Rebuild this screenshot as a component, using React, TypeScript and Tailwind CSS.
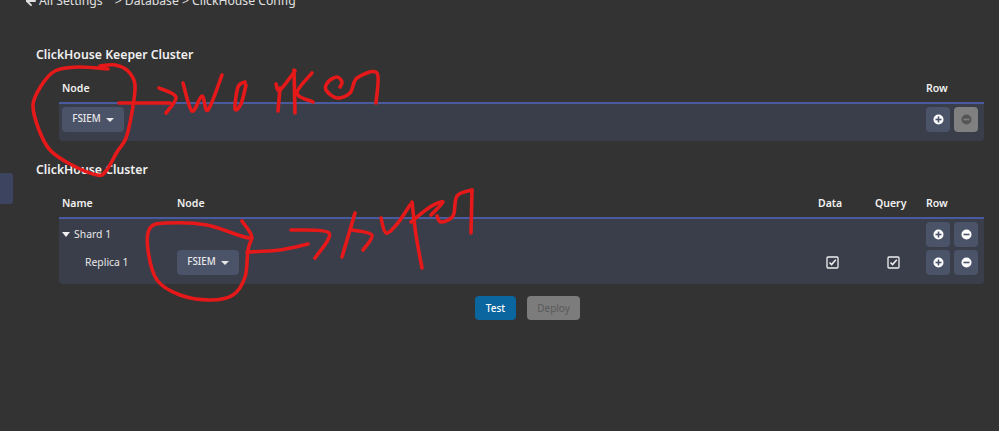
import React from "react";
import { ArrowLeft } from "lucide-react";

type P = [number, number];
function smooth(pts: P[]): string {
  let d = `M${pts[0][0]} ${pts[0][1]}`;
  for (let i = 0; i < pts.length - 1; i++) {
    const p0 = pts[i - 1] || pts[i];
    const p1 = pts[i];
    const p2 = pts[i + 1];
    const p3 = pts[i + 2] || p2;
    const c1x = p1[0] + (p2[0] - p0[0]) / 6;
    const c1y = p1[1] + (p2[1] - p0[1]) / 6;
    const c2x = p2[0] - (p3[0] - p1[0]) / 6;
    const c2y = p2[1] - (p3[1] - p1[1]) / 6;
    d += ` C${c1x} ${c1y} ${c2x} ${c2y} ${p2[0]} ${p2[1]}`;
  }
  return d;
}

const strokes: P[][] = [
  [[108, 69], [78, 67], [55, 71], [41, 86], [33, 105], [39, 130], [50, 150], [70, 164], [97, 175], [106, 171], [117, 152], [126, 138], [132, 112], [135, 85], [128, 71], [115, 65], [100, 66]],
  [[119, 103], [170, 103]],
  [[159, 88], [176, 97], [166, 113]],
  [[183, 83], [192, 111], [202, 96], [208, 110], [222, 75]],
  [[245, 82], [238, 87], [235, 109], [241, 104], [246, 85]],
  [[276, 84], [280, 90], [295, 71]],
  [[280, 88], [278, 111]],
  [[294, 70], [295, 113]],
  [[312, 73], [297, 93], [313, 102]],
  [[340, 87], [342, 82], [337, 77], [328, 82], [326, 90], [337, 98], [350, 93], [357, 78], [377, 73], [376, 103]],
  [[242, 221], [250, 238], [207, 225], [167, 223], [150, 228], [148, 250], [157, 280], [180, 295], [210, 300], [233, 295], [245, 277], [248, 250], [252, 238]],
  [[247, 252], [280, 250], [308, 244]],
  [[291, 230], [329, 233], [315, 258]],
  [[355, 213], [342, 257]],
  [[352, 230], [372, 235], [363, 250]],
  [[381, 218], [386, 233], [397, 224], [410, 205]],
  [[412, 202], [416, 235], [422, 268]],
  [[411, 222], [430, 207], [443, 202], [431, 215]],
  [[437, 216], [441, 222], [453, 216], [457, 196], [472, 190]],
  [[472, 190], [471, 233]],
];

function Ring({ kind, muted }: { kind: "plus" | "minus"; muted?: boolean }) {
  const fg = muted ? "#555555" : "#ffffff";
  const inner = muted ? "#808080" : "#4a5368";
  return (
    <svg width="11" height="11" viewBox="0 0 11 11">
      <circle cx="5.5" cy="5.5" r="5" fill={fg} />
      <rect x="2.5" y="4.7" width="6" height="1.6" fill={inner} />
      {kind === "plus" && <rect x="4.7" y="2.5" width="1.6" height="6" fill={inner} />}
    </svg>
  );
}

function RowBtn({ kind, muted }: { kind: "plus" | "minus"; muted?: boolean }) {
  return (
    <button className={`flex h-[25px] w-6 items-center justify-center rounded-[4px] ${muted ? "bg-[#808080]" : "bg-[#4a5368]"}`}>
      <Ring kind={kind} muted={muted} />
    </button>
  );
}

function NodeSelect() {
  return (
    <button className="flex h-[25px] w-[62px] items-center justify-center gap-[5px] rounded-[4px] bg-[#4a5368] text-[9.8px] font-medium text-[#e8e8e8]">
      FSIEM
      <span className="h-0 w-0 border-x-[4px] border-t-[4px] border-x-transparent border-t-[#e8e8e8]" />
    </button>
  );
}

function Check() {
  return (
    <svg width="13" height="13" viewBox="0 0 13 13">
      <rect x="1" y="1" width="11" height="11" rx="1" fill="none" stroke="#f0f0f0" strokeWidth="1.3" />
      <path d="M3.5 6.5 L5.6 8.6 L9.8 3.8" fill="none" stroke="#f0f0f0" strokeWidth="1.5" />
    </svg>
  );
}

export default function App() {
  return (
    <div
      className="relative h-[431px] w-[999px] overflow-hidden bg-[#333333] text-[#e8e8e8]"
      style={{ fontFamily: '"Noto Sans", "DejaVu Sans", sans-serif' }}
    >
      <div className="mt-[-9px] ml-6 flex h-5 items-center text-[12.2px] text-[#e0e0e0]">
        <ArrowLeft size={14} strokeWidth={3.2} className="mr-[1px]" />
        <span>All Settings</span>
        <span className="ml-3">&gt; Database &gt; ClickHouse Config</span>
      </div>

      <div className="absolute top-[173px] left-0 h-[31px] w-[13px] rounded-r-[3px] bg-[#3c4460]" />

      <div className="mt-[34px] ml-9 w-[948px]">
        <h2 className="h-[20px] text-[12.25px] leading-[20px] font-semibold text-[#f0f0f0]">ClickHouse Keeper Cluster</h2>
        <div className="mt-[15px] ml-[23px] w-[925px]">
          <div className="flex h-[17px] items-center px-[3px] text-[10.5px] font-semibold text-[#f0f0f0]">
            <span>Node</span>
            <span className="ml-auto w-[55px]">Row</span>
          </div>
          <div className="mt-[5px] flex h-[39px] items-start rounded-b-[4px] border-t-2 border-[#4a5a9f] bg-[#393e4a] pt-[3px] pr-[6px] pl-[3px]">
            <NodeSelect />
            <div className="ml-auto flex gap-1">
              <RowBtn kind="plus" />
              <RowBtn kind="minus" muted />
            </div>
          </div>
        </div>

        <h2 className="mt-[19px] h-[20px] text-[12.25px] leading-[20px] font-semibold text-[#f0f0f0]">ClickHouse Cluster</h2>
        <div className="mt-[15px] ml-[23px] w-[925px]">
          <div className="flex h-[17px] items-center px-[3px] text-[10.5px] font-semibold text-[#f0f0f0]">
            <span className="w-[115px]">Name</span>
            <span>Node</span>
            <span className="ml-auto w-[57px]">Data</span>
            <span className="w-[51px]">Query</span>
            <span className="w-[55px]">Row</span>
          </div>
          <div className="mt-[5px] flex h-[67px] flex-col gap-[3px] rounded-b-[4px] border-t-2 border-[#4a5a9f] bg-[#393e4a] pt-[3px] pr-[6px] pl-[3px] text-[10.4px]">
            <div className="flex h-[25px] items-center">
              <span className="mr-[4px] h-0 w-0 border-x-[4px] border-t-[5px] border-x-transparent border-t-[#f0f0f0]" />
              <span className="pt-[1px]">Shard 1</span>
              <div className="ml-auto flex gap-1">
                <RowBtn kind="plus" />
                <RowBtn kind="minus" />
              </div>
            </div>
            <div className="flex h-[25px] items-center">
              <span className="w-[115px] pt-[1px] pl-[23px]">Replica 1</span>
              <NodeSelect />
              <div className="ml-auto flex items-center">
                <span className="mr-[10px] flex w-[61px] justify-center"><Check /></span>
                <span className="mr-[13px] flex w-[40px] justify-center"><Check /></span>
                <div className="flex gap-1">
                  <RowBtn kind="plus" />
                  <RowBtn kind="minus" />
                </div>
              </div>
            </div>
          </div>
          <div className="mt-[12px] ml-[416px] flex gap-[11px] text-[10px]">
            <button className="h-6 w-[41px] rounded-[4px] bg-[#0b659f] font-medium text-white">Test</button>
            <button className="h-6 w-[53px] rounded-[4px] bg-[#7c7c7c] text-[#5a5a5a]">Deploy</button>
          </div>
        </div>
      </div>

      <svg className="pointer-events-none absolute top-0 left-0" width="999" height="431">
        {strokes.map((s, i) => (
          <path key={i} d={smooth(s)} fill="none" stroke="#e51919" strokeWidth="3.6" strokeLinecap="round" strokeLinejoin="round" />
        ))}
      </svg>
    </div>
  );
}
